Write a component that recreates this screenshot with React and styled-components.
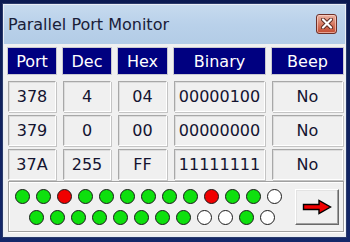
import styled, { createGlobalStyle } from "styled-components";

/*________________________________________________________________________________*/
const header = ["Port", "Dec", "Hex", "Binary", "Beep"];
const rows = [
  ["378", "4", "04", "00000100", "No"],
  ["379", "0", "00", "00000000", "No"],
  ["37A", "255", "FF", "11111111", "No"],
];
// g = green, r = red, w = white
const ledsTop = "ggrggggggrggw".split("");
const ledsBottom = "ggggggggwwgw".split("");

const App = () => {
  return (
    <>
      <GlobalStyle />
      <Desktop>
        <Window>
          <TitleBar>
            <h1>Parallel Port Monitor</h1>
            <CloseButton>
              <svg width="12" height="11" viewBox="0 0 12 11">
                <path d="M2 1.5 L10 9.5 M10 1.5 L2 9.5" stroke="#5a2a22" strokeWidth="4" strokeLinecap="round" />
                <path d="M2 1.5 L10 9.5 M10 1.5 L2 9.5" stroke="#fff" strokeWidth="2.2" strokeLinecap="round" />
              </svg>
            </CloseButton>
          </TitleBar>
          <Client>
            <Table>
              {header.map((h) => (
                <HeadCell key={h}>{h}</HeadCell>
              ))}
              {rows.map((r) =>
                r.map((v, i) => <Cell key={r[0] + i}>{v}</Cell>)
              )}
            </Table>
            <GroupBox>
              <LedRows>
                <LedRow>
                  {ledsTop.map((c, i) => (
                    <Led key={i} $color={c} />
                  ))}
                </LedRow>
                <LedRow $shift>
                  {ledsBottom.map((c, i) => (
                    <Led key={i} $color={c} />
                  ))}
                </LedRow>
              </LedRows>
              <ArrowButton>
                <svg width="30" height="16" viewBox="0 0 30 16">
                  <path
                    d="M1.5 5.5 H17 V1.5 L28.5 8 L17 14.5 V10.5 H1.5 Z"
                    fill="#f00000"
                    stroke="#000"
                    strokeWidth="1.4"
                  />
                </svg>
              </ArrowButton>
            </GroupBox>
          </Client>
        </Window>
      </Desktop>
    </>
  );
};
export default App;

/*________________________________________________________________________________*/
const GlobalStyle = createGlobalStyle`
  html, body {
    margin: 0;
    padding: 0;
    background: #0e1f5c;
  }
  * { box-sizing: border-box; }
`;

const Desktop = styled.div`
  width: 350px;
  height: 242px;
  background: linear-gradient(180deg, #0b1a52 0%, #14286a 100%);
  padding: 4px 0 0 3px;
  overflow: hidden;
`;

const Window = styled.div`
  width: 343px;
  height: 233px;
  background: #f0f0f0;
  border: 1px solid #e8eef6;
  box-shadow: 0 0 0 1px #2a3a6a;
  display: flex;
  flex-direction: column;
`;

/*_________________________________________*/
const TitleBar = styled.div`
  height: 39px;
  display: flex;
  align-items: center;
  justify-content: space-between;
  padding: 0 8px 0 4px;
  background: linear-gradient(180deg, #c6daee 0%, #b9d1ea 50%, #b3cce6 100%);
  h1 {
    margin: 0;
    font-family: "DejaVu Sans", sans-serif;
    font-size: 16px;
    font-weight: normal;
    color: #1a2038;
  }
`;

const CloseButton = styled.div`
  width: 21px;
  height: 20px;
  border: 1px solid #6e3028;
  border-radius: 3px;
  background: linear-gradient(180deg, #eab4a4 0%, #d77a62 50%, #c24a30 100%);
  box-shadow: inset 0 0 0 1px rgba(255, 220, 210, 0.6);
  display: flex;
  align-items: center;
  justify-content: center;
  margin-top: -2px;
`;

/*_________________________________________*/
const Client = styled.div`
  flex: 1;
  padding: 4px 0 0 4px;
  display: flex;
  flex-direction: column;
`;

const Table = styled.div`
  display: grid;
  grid-template-columns: 48px 48px 49px 91px 71px;
  grid-template-rows: 26px 31px 31px 31px;
  column-gap: 7px;
  row-gap: 3px;
`;

const HeadCell = styled.div`
  background: #000080;
  color: #fff;
  font-family: "DejaVu Sans", sans-serif;
  font-size: 16px;
  display: flex;
  align-items: center;
  justify-content: center;
  box-shadow: 0 0 0 1px #c8c8d0;
  margin-bottom: 4px;
  height: 26px;
`;

const Cell = styled.div`
  background: #f0f0f0;
  color: #141430;
  font-family: "DejaVu Sans", sans-serif;
  font-size: 16px;
  display: flex;
  align-items: center;
  justify-content: center;
  border: 1px solid;
  border-color: #a8a8a8 #fff #fff #a8a8a8;
  box-shadow: inset 1px 1px 0 #dcdcdc, 1px 1px 0 #c4c4c4;
  margin-top: 4px;
  height: 31px;
`;

/*_________________________________________*/
const GroupBox = styled.div`
  margin: 5px 0 0 0;
  width: 336px;
  height: 51px;
  border: 1px solid #a0a0a0;
  box-shadow: inset 1px 1px 0 #fff, 1px 1px 0 #fff;
  display: flex;
  align-items: center;
  padding: 0 4px 0 6px;
`;

const LedRows = styled.div`
  display: flex;
  flex-direction: column;
  gap: 6px;
`;

const LedRow = styled.div`
  display: flex;
  gap: 6px;
  margin-left: ${(p) => (p.$shift ? "14px" : "0")};
`;

const ledColors = { g: "#0ee00e", r: "#f00000", w: "#ffffff" };

const Led = styled.div`
  width: 15px;
  height: 15px;
  border-radius: 50%;
  background: ${(p) => ledColors[p.$color]};
  border: 1px solid #1a1a1a;
`;

const ArrowButton = styled.div`
  margin-left: auto;
  width: 44px;
  height: 36px;
  background: #f0f0f0;
  border: 1px solid;
  border-color: #fff #696969 #696969 #fff;
  box-shadow: inset -1px -1px 0 #a0a0a0, inset 1px 1px 0 #e3e3e3;
  display: flex;
  align-items: center;
  justify-content: center;
`;
